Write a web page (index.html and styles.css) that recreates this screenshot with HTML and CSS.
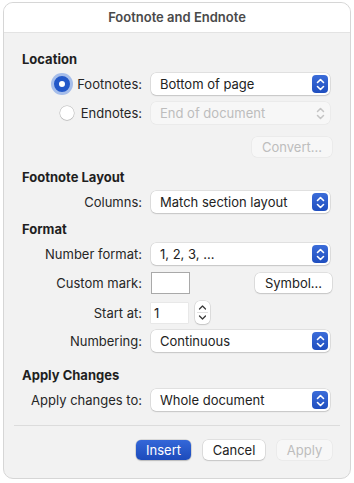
FILE: index.html
```html
<!DOCTYPE html>
<html lang="en">
<head>
  <meta charset="UTF-8">
  <title>Footnote and Endnote</title>
  <link rel="stylesheet" href="styles.css">
</head>
<body>
  <div class="window">
    <div class="titlebar">Footnote and Endnote</div>

    <div class="content">
      <h2 class="heading first">Location</h2>

      <div class="row">
        <div class="label">
          <span class="radio checked"></span>Footnotes:
        </div>
        <div class="popup">
          <span>Bottom of page</span>
          <span class="arrows"><svg width="9" height="13" viewBox="0 0 9 13"><path d="M1.5 4.5 L4.5 1.5 L7.5 4.5 M1.5 8.5 L4.5 11.5 L7.5 8.5" fill="none" stroke="#fff" stroke-width="1.6" stroke-linecap="round" stroke-linejoin="round"/></svg></span>
        </div>
      </div>

      <div class="row">
        <div class="label">
          <span class="radio"></span>Endnotes:
        </div>
        <div class="popup disabled">
          <span>End of document</span>
          <span class="arrows"><svg width="9" height="13" viewBox="0 0 9 13"><path d="M1.5 4.5 L4.5 1.5 L7.5 4.5 M1.5 8.5 L4.5 11.5 L7.5 8.5" fill="none" stroke="#c4c4c4" stroke-width="1.5" stroke-linecap="round" stroke-linejoin="round"/></svg></span>
        </div>
      </div>

      <div class="convert-line">
        <button class="btn disabled convert">Convert...</button>
      </div>

      <h2 class="heading">Footnote Layout</h2>

      <div class="row">
        <div class="label">Columns:</div>
        <div class="popup">
          <span>Match section layout</span>
          <span class="arrows"><svg width="9" height="13" viewBox="0 0 9 13"><path d="M1.5 4.5 L4.5 1.5 L7.5 4.5 M1.5 8.5 L4.5 11.5 L7.5 8.5" fill="none" stroke="#fff" stroke-width="1.6" stroke-linecap="round" stroke-linejoin="round"/></svg></span>
        </div>
      </div>

      <h2 class="heading format">Format</h2>

      <div class="row">
        <div class="label">Number format:</div>
        <div class="popup">
          <span>1, 2, 3, ...</span>
          <span class="arrows"><svg width="9" height="13" viewBox="0 0 9 13"><path d="M1.5 4.5 L4.5 1.5 L7.5 4.5 M1.5 8.5 L4.5 11.5 L7.5 8.5" fill="none" stroke="#fff" stroke-width="1.6" stroke-linecap="round" stroke-linejoin="round"/></svg></span>
        </div>
      </div>

      <div class="row">
        <div class="label">Custom mark:</div>
        <div class="mark-line">
          <div class="mark-box"></div>
          <button class="btn symbol">Symbol...</button>
        </div>
      </div>

      <div class="row">
        <div class="label">Start at:</div>
        <div class="start-line">
          <div class="start-field">1</div>
          <div class="stepper">
            <svg width="15" height="23" viewBox="0 0 15 23"><path d="M4.5 8 L7.5 5 L10.5 8 M4.5 15 L7.5 18 L10.5 15" fill="none" stroke="#3a3a3a" stroke-width="1.3" stroke-linecap="round" stroke-linejoin="round"/><path d="M2 11.5 H13" stroke="#e2e2e2" stroke-width="1"/></svg>
          </div>
        </div>
      </div>

      <div class="row">
        <div class="label">Numbering:</div>
        <div class="popup">
          <span>Continuous</span>
          <span class="arrows"><svg width="9" height="13" viewBox="0 0 9 13"><path d="M1.5 4.5 L4.5 1.5 L7.5 4.5 M1.5 8.5 L4.5 11.5 L7.5 8.5" fill="none" stroke="#fff" stroke-width="1.6" stroke-linecap="round" stroke-linejoin="round"/></svg></span>
        </div>
      </div>

      <h2 class="heading apply">Apply Changes</h2>

      <div class="row">
        <div class="label">Apply changes to:</div>
        <div class="popup">
          <span>Whole document</span>
          <span class="arrows"><svg width="9" height="13" viewBox="0 0 9 13"><path d="M1.5 4.5 L4.5 1.5 L7.5 4.5 M1.5 8.5 L4.5 11.5 L7.5 8.5" fill="none" stroke="#fff" stroke-width="1.6" stroke-linecap="round" stroke-linejoin="round"/></svg></span>
        </div>
      </div>
    </div>

    <div class="divider"></div>

    <div class="actions">
      <button class="btn primary">Insert</button>
      <button class="btn cancel">Cancel</button>
      <button class="btn disabled apply-btn">Apply</button>
    </div>
  </div>
</body>
</html>
```

FILE: styles.css
```css
body {
  margin: 0;
  background-color: #ffffff;
  font-family: 'Inter', 'Noto Sans', sans-serif;
  font-size: 13px;
  color: #262626;
}
.window {
  margin: 2px 3px 0 3px;
  height: 477px;
  background-color: #f2f2f2;
  border: 1px solid #d6d6d6;
  border-radius: 10px;
  overflow: hidden;
  box-sizing: border-box;
}
.titlebar {
  height: 29px;
  line-height: 29px;
  background-color: #ffffff;
  border-bottom: 1px solid #e3e3e3;
  text-align: center;
  font-weight: 600;
  color: #4a4a4a;
}
.content {
  padding: 0 18px;
}
.heading {
  margin: 0;
  height: 16px;
  line-height: 16px;
  font-size: 13px;
  font-weight: 700;
  color: #1f1f1f;
}
.heading.first {
  margin-top: 18px;
}
.row {
  display: grid;
  grid-template-columns: 120px 1fr;
  column-gap: 9px;
  align-items: center;
  height: 22px;
  margin-top: 7px;
}
.heading + .row {
  margin-top: 6px;
}
.label {
  display: flex;
  justify-content: flex-end;
  align-items: center;
  white-space: nowrap;
}
.radio {
  width: 14px;
  height: 14px;
  border-radius: 50%;
  background-color: #ffffff;
  box-shadow: 0 0 0 0.5px rgba(0, 0, 0, 0.25), 0 1px 1px rgba(0, 0, 0, 0.08);
  margin-right: 7px;
}
.radio.checked {
  width: 6px;
  height: 6px;
  border: 5px solid #2358c8;
  box-shadow: 0 0 0 3px #a5bdea;
  margin-right: 7px;
}
.popup {
  display: flex;
  justify-content: space-between;
  align-items: center;
  height: 22px;
  margin-right: 2px;
  padding: 0 2px 0 9px;
  background-color: #ffffff;
  border-radius: 5px;
  box-shadow: 0 0 0 0.5px rgba(0, 0, 0, 0.14), 0 1px 1.5px rgba(0, 0, 0, 0.12);
  color: #222222;
}
.arrows {
  display: flex;
  justify-content: center;
  align-items: center;
  width: 16px;
  height: 18px;
  border-radius: 4px;
  background: linear-gradient(#3b6cd9, #1f4ebf);
}
.popup.disabled {
  background-color: #f7f7f7;
  color: #bdbdbd;
  box-shadow: 0 0 0 0.5px rgba(0, 0, 0, 0.06);
}
.popup.disabled .arrows {
  background: none;
}
.convert-line {
  display: flex;
  justify-content: flex-end;
  margin-top: 13px;
}
.btn {
  height: 20px;
  padding: 0;
  border: none;
  border-radius: 5px;
  font-family: inherit;
  font-size: 13px;
  color: #222222;
  background-color: #ffffff;
  box-shadow: 0 0 0 0.5px rgba(0, 0, 0, 0.14), 0 1px 1.5px rgba(0, 0, 0, 0.12);
}
.btn.disabled {
  background-color: #f7f7f7;
  color: #bdbdbd;
  box-shadow: 0 0 0 0.5px rgba(0, 0, 0, 0.06);
}
.convert {
  width: 80px;
}
.heading:not(.first) {
  margin-top: 12px;
}
.heading.format {
  margin-top: 8px;
}
.heading.apply {
  margin-top: 15px;
}
.mark-line {
  display: flex;
  justify-content: space-between;
  align-items: center;
}
.mark-box {
  width: 37px;
  height: 20px;
  background-color: #ffffff;
  border: 1px solid #a9a9a9;
}
.symbol {
  width: 77px;
}
.start-line {
  display: flex;
  align-items: center;
  gap: 7px;
}
.start-field {
  width: 34px;
  height: 20px;
  line-height: 20px;
  padding-left: 3px;
  background-color: #ffffff;
  box-shadow: 0 0 0 0.5px rgba(0, 0, 0, 0.08);
  color: #222222;
}
.stepper {
  display: flex;
  width: 15px;
  height: 23px;
  background-color: #ffffff;
  border-radius: 5px;
  box-shadow: 0 0 0 0.5px rgba(0, 0, 0, 0.14), 0 1px 1.5px rgba(0, 0, 0, 0.12);
}
.divider {
  height: 1px;
  margin: 14px 10px 0 10px;
  background-color: #dcdcdc;
}
.actions {
  display: flex;
  justify-content: flex-end;
  gap: 12px;
  padding: 14px 18px 0 0;
}
.primary {
  width: 55px;
  color: #ffffff;
  background: linear-gradient(#3467d8, #1c4bbb);
  box-shadow: 0 0 0 0.5px rgba(0, 0, 0, 0.2), 0 1px 1.5px rgba(0, 0, 0, 0.15);
}
.cancel {
  width: 62px;
}
.apply-btn {
  width: 55px;
}
```
